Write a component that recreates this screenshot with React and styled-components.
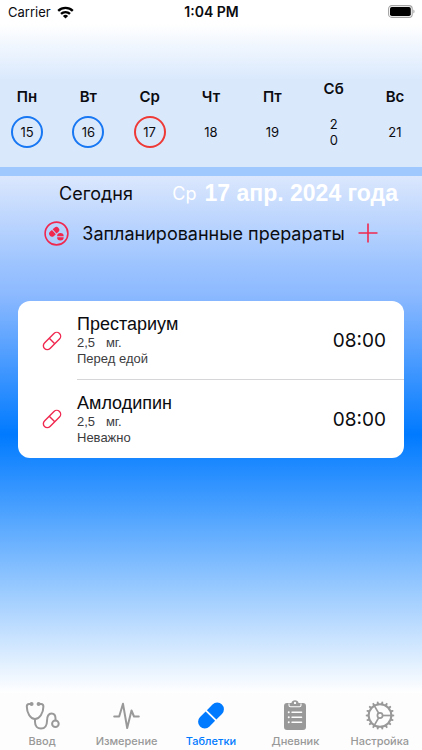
import React, { useState } from 'react';
import styled, { createGlobalStyle } from 'styled-components';

const GlobalStyle = createGlobalStyle`
  * {
    box-sizing: border-box;
  }
  body {
    margin: 0;
    background: #fff;
    color: #0b0c10;
    font-family: Inter, "Liberation Sans", sans-serif;
  }
  button {
    padding: 0;
    border: 0;
    background: none;
    color: inherit;
    font: inherit;
    cursor: pointer;
  }
  svg {
    display: block;
    flex: none;
  }
`;

const Screen = styled.div`
  display: flex;
  flex-direction: column;
  min-height: 100vh;
`;

const StatusBar = styled.header`
  display: grid;
  grid-template-columns: 1fr auto 1fr;
  align-items: start;
  height: 79px;
  padding: 4px 7px 0 8px;
  background: linear-gradient(#fff 24px, #dae9fd);
  font-size: 13px;
  line-height: 16px;
`;

const Carrier = styled.div`
  display: flex;
  align-items: center;
  gap: 6px;
`;

const Clock = styled.time`
  font-size: 14px;
  font-weight: 600;
`;

const Battery = styled.div`
  justify-self: end;
  padding-top: 1px;
`;

const Week = styled.nav`
  display: flex;
  align-items: center;
  justify-content: space-between;
  height: 88px;
  padding: 0 11px 12px;
  background: #dae8fc;
`;

const Day = styled.button`
  display: flex;
  flex-direction: column;
  align-items: center;
  gap: 8px;
  width: 32px;
`;

const DayName = styled.span`
  font-size: 15px;
  font-weight: 600;
  line-height: 22px;
`;

const DayNumber = styled.span`
  width: ${props => props.$narrow ? '24px' : '32px'};
  padding: 8px ${props => props.$narrow ? '8px' : '0'};
  border-radius: 16px;
  box-shadow: inset 0 0 0 2px ${props => props.$ring || 'transparent'};
  font-size: 13px;
  line-height: 16px;
  overflow-wrap: anywhere;
`;

const Divider = styled.div`
  height: 9px;
  background: #9fc8fe;
`;

const Content = styled.main`
  flex: 1;
  background: linear-gradient(#dbe7fd, #9ac2ff 18%, #8cb9ff 23%, #007aff 50%, #fff);
`;

const DateRow = styled.div`
  display: flex;
  align-items: center;
  justify-content: space-between;
  height: 34px;
  padding: 0 24px 0 59px;
  font-size: 18px;
  white-space: nowrap;
`;

const DateText = styled.div`
  display: flex;
  align-items: center;
  gap: 8px;
  color: #fff;

  strong {
    font-family: "Liberation Sans", sans-serif;
    font-size: 23px;
    font-weight: 700;
  }
`;

const TitleRow = styled.div`
  display: flex;
  align-items: center;
  justify-content: center;
  gap: 13px;
  height: 46px;
  white-space: nowrap;
`;

const Title = styled.h1`
  margin: 0;
  font-size: 18px;
  font-weight: 400;
`;

const Card = styled.ul`
  margin: 45px 18px 0;
  padding: 0;
  border-radius: 12px;
  background: #fff;
  list-style: none;
`;

const Medicine = styled.li`
  display: flex;
  align-items: center;
  padding-left: 24px;
`;

const MedicineBody = styled.div`
  display: flex;
  flex: 1;
  align-items: center;
  justify-content: space-between;
  box-sizing: content-box;
  height: 78px;
  margin-left: 15px;
  padding-right: 18px;
  border-bottom: ${props => props.$last ? 'none' : '1px solid #d6d6d8'};
`;

const MedicineInfo = styled.div`
  font-family: "Liberation Sans", sans-serif;
`;

const Name = styled.h2`
  margin: 0;
  font-size: 18px;
  font-weight: 400;
  line-height: 22px;
`;

const Note = styled.p`
  margin: 0;
  color: #3c3c3e;
  font-size: 13px;
  line-height: 16px;
  white-space: pre;
`;

const Time = styled.time`
  font-size: 19px;
`;

const TabBar = styled.nav`
  display: grid;
  grid-template-columns: repeat(5, 1fr);
  height: 57px;
  padding-top: 6px;
  background: #fdfdfd;
`;

const Tab = styled.button`
  display: flex;
  flex-direction: column;
  align-items: center;
  gap: 1px;
  color: ${props => props.$active ? '#007aff' : '#999'};
  font-size: 11px;
  font-weight: 500;
  line-height: 14px;
`;

const WifiIcon = () => (
  <svg width="17" height="13" viewBox="0 0 17 13" fill="none" stroke="#000" strokeWidth="2.3">
    <path d="M1.2 4.9a10.4 10.4 0 0 1 14.6 0" />
    <path d="M4 7.9a6.4 6.4 0 0 1 9 0" />
    <path d="M8.5 12.6 5.9 10a3.7 3.7 0 0 1 5.2 0z" fill="#000" stroke="none" />
  </svg>
);

const BatteryIcon = () => (
  <svg width="27" height="13" viewBox="0 0 27 13">
    <rect x=".6" y=".6" width="23.6" height="11.8" rx="3.2" fill="none" stroke="#a5a5a5" strokeWidth="1.1" />
    <rect x="2" y="2" width="20.8" height="9" rx="1.8" />
    <path d="M25.4 4.5c1.5.6 1.5 3.4 0 4z" fill="#a5a5a5" />
  </svg>
);

const PillsIcon = () => (
  <svg width="25" height="25" viewBox="0 0 25 25" fill="#f0284f">
    <circle cx="12.5" cy="12.5" r="11.4" fill="none" stroke="#f0284f" strokeWidth="1.6" />
    <g transform="rotate(-42 10.2 10.8)">
      <path d="M9.8 7.9v5.8H7.3a2.9 2.9 0 0 1 0-5.8z" />
      <path d="M10.7 7.9v5.8h2.4a2.9 2.9 0 0 0 0-5.8z" />
    </g>
    <path d="M13.1 15.2a3.3 3.3 0 0 1 6.6 0z" />
    <path d="M13.1 16.2a3.3 3.3 0 0 0 6.6 0z" />
  </svg>
);

const PlusIcon = () => (
  <svg width="20" height="20" viewBox="0 0 20 20" stroke="#f0284f" strokeWidth="1.6">
    <path d="M.5 10h19M10 .5v19" />
  </svg>
);

const CapsuleIcon = () => (
  <svg width="20" height="20" viewBox="0 0 20 20" fill="none" stroke="#f0284f" strokeWidth="1.4">
    <g transform="rotate(-45 10 10)">
      <rect x="-.6" y="6.1" width="21.2" height="7.8" rx="3.9" />
      <path d="M10 6.1v7.8" />
    </g>
  </svg>
);

const StethoscopeIcon = () => (
  <svg width="36" height="34" viewBox="0 0 36 32" fill="none" stroke="currentColor" strokeWidth="2" strokeLinecap="round">
    <path d="M7 4H5Q2.8 4 2.8 6.5C2.8 13 6.5 19 11 19s8.4-6 8.4-12.5Q19.4 4 17.2 4H15" />
    <path d="M11 19v3c0 4 2.5 6.6 6 6.6 4 0 6-3.6 6-7.6 0-5 1.5-7.5 4.5-7.5 2.5 0 4 2 4 5v1.8" />
    <circle cx="31.4" cy="23.8" r="3.3" />
    <circle cx="7.6" cy="4" r="1" fill="currentColor" />
    <circle cx="14.6" cy="4" r="1" fill="currentColor" />
  </svg>
);

const PulseIcon = () => (
  <svg width="27" height="34" viewBox="0 0 27 34" fill="none" stroke="currentColor" strokeWidth="2" strokeLinejoin="round" strokeLinecap="round">
    <path d="M1.2 17.5h5L10 4.8 14.2 29 18.5 11.5 21 17.5h4.8" />
  </svg>
);

const TabletIcon = () => (
  <svg width="34" height="34" viewBox="0 0 34 34" fill="currentColor">
    <g transform="rotate(-45 17 16.5)">
      <path d="M16.1 9.8v13.4H8.2a6.7 6.7 0 0 1 0-13.4z" />
      <path d="M17.9 9.8v13.4h7.9a6.7 6.7 0 0 0 0-13.4z" />
    </g>
  </svg>
);

const ClipboardIcon = () => (
  <svg width="22" height="34" viewBox="0 0 22 34">
    <path d="M3 4h4.4a3.7 3.7 0 0 1 7.2 0H19a3 3 0 0 1 3 3v21a3 3 0 0 1-3 3H3a3 3 0 0 1-3-3V7a3 3 0 0 1 3-3z" fill="currentColor" />
    <path d="M5 4.4v1.9q0 1.5 1.5 1.5h9q1.5 0 1.5-1.5V4.4" fill="none" stroke="#fdfdfd" strokeWidth="1.1" />
    <circle cx="11" cy="3.9" r="1.2" fill="#fdfdfd" />
    <path d="M8 13.3h9.6M8 18.3h9.6M8 23.3h9.6" stroke="#fdfdfd" strokeWidth="1.4" strokeLinecap="round" />
    <path d="M4.7 13.3h.1M4.7 18.3h.1M4.7 23.3h.1" stroke="#fdfdfd" strokeWidth="1.9" strokeLinecap="round" />
  </svg>
);

const teeth = Array.from({ length: 18 }, (_, i) => i * 20);

const GearIcon = () => (
  <svg width="30" height="34" viewBox="0 0 30 34" fill="none" stroke="currentColor" strokeWidth="1.7">
    <circle cx="15" cy="16.5" r="11.3" strokeWidth="2" />
    <circle cx="15" cy="16.5" r="2.6" />
    {[0, 120, 240].map(angle => (
      <path key={angle} d="M17.7 16.5h8.5" transform={`rotate(${angle} 15 16.5)`} />
    ))}
    {teeth.map(angle => (
      <path key={angle} d="M26.5 15.2 29.2 15.8v1.4l-2.7.6z" transform={`rotate(${angle} 15 16.5)`} fill="currentColor" stroke="none" />
    ))}
  </svg>
);

const days = [
  { name: 'Пн', number: 15, ring: '#1877f2' },
  { name: 'Вт', number: 16, ring: '#1877f2' },
  { name: 'Ср', number: 17, ring: '#ee3a36' },
  { name: 'Чт', number: 18 },
  { name: 'Пт', number: 19 },
  { name: 'Сб', number: 20, narrow: true },
  { name: 'Вс', number: 21 },
];

const medicines = [
  { name: 'Престариум', dose: '2,5', note: 'Перед едой', time: '08:00' },
  { name: 'Амлодипин', dose: '2,5', note: 'Неважно', time: '08:00' },
];

const tabs = [
  { label: 'Ввод', Icon: StethoscopeIcon },
  { label: 'Измерение', Icon: PulseIcon },
  { label: 'Таблетки', Icon: TabletIcon },
  { label: 'Дневник', Icon: ClipboardIcon },
  { label: 'Настройка', Icon: GearIcon },
];

const App = () => {
  const [activeTab, setActiveTab] = useState('Таблетки');

  return (
    <Screen>
      <GlobalStyle />
      <StatusBar>
        <Carrier>
          Carrier
          <WifiIcon />
        </Carrier>
        <Clock>1:04 PM</Clock>
        <Battery>
          <BatteryIcon />
        </Battery>
      </StatusBar>
      <Week>
        {days.map(day => (
          <Day key={day.number}>
            <DayName>{day.name}</DayName>
            <DayNumber $ring={day.ring} $narrow={day.narrow}>{day.number}</DayNumber>
          </Day>
        ))}
      </Week>
      <Divider />
      <Content>
        <DateRow>
          <button>Сегодня</button>
          <DateText>
            <span>Ср</span>
            <strong>17 апр. 2024 года</strong>
          </DateText>
        </DateRow>
        <TitleRow>
          <PillsIcon />
          <Title>Запланированные прерараты</Title>
          <button aria-label="Добавить">
            <PlusIcon />
          </button>
        </TitleRow>
        <Card>
          {medicines.map((item, index) => (
            <Medicine key={item.name}>
              <CapsuleIcon />
              <MedicineBody $last={index === medicines.length - 1}>
                <MedicineInfo>
                  <Name>{item.name}</Name>
                  <Note>{item.dose}{'   '}мг.</Note>
                  <Note>{item.note}</Note>
                </MedicineInfo>
                <Time>{item.time}</Time>
              </MedicineBody>
            </Medicine>
          ))}
        </Card>
      </Content>
      <TabBar>
        {tabs.map(({ label, Icon }) => (
          <Tab key={label} $active={label === activeTab} onClick={() => setActiveTab(label)}>
            <Icon />
            {label}
          </Tab>
        ))}
      </TabBar>
    </Screen>
  );
};

export default App;
